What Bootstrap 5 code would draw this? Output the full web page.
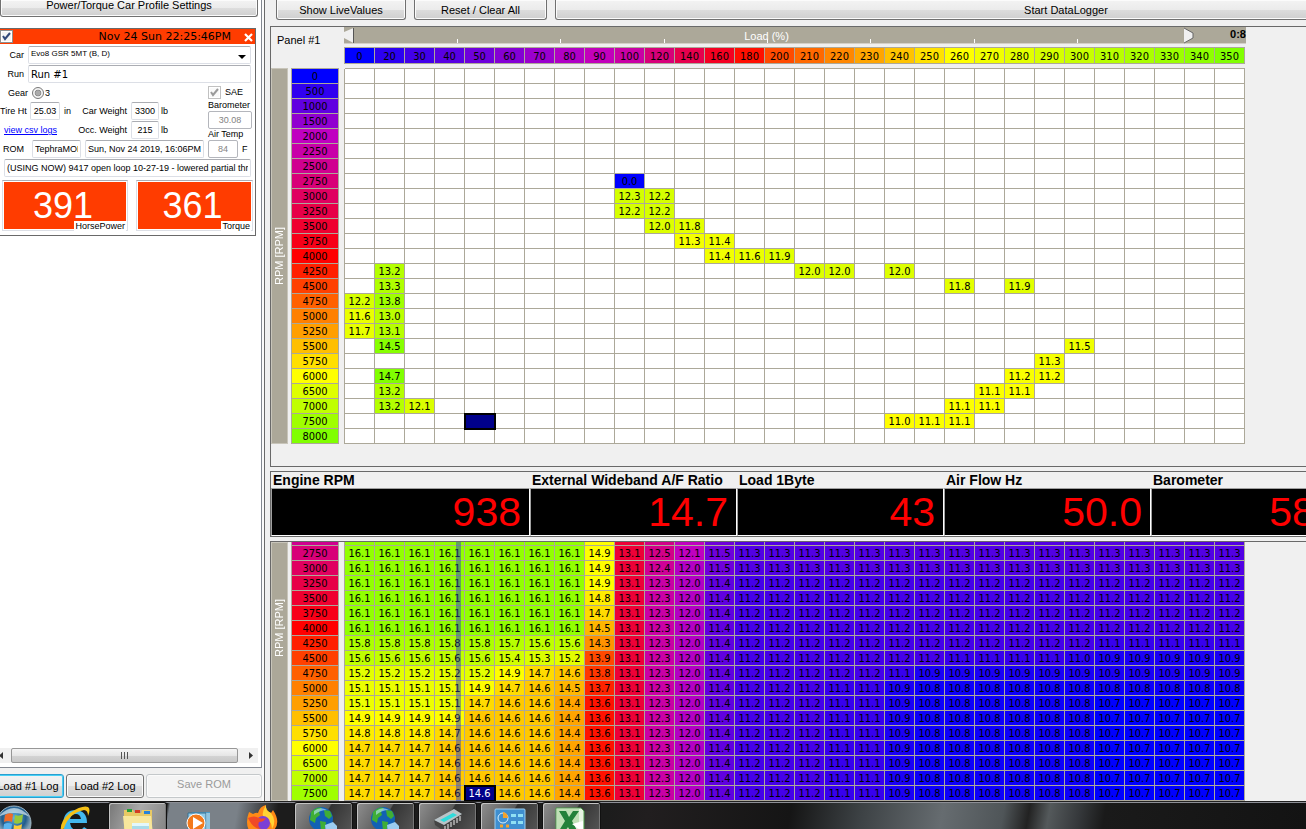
<!DOCTYPE html>
<html lang="en">
<head>
<meta charset="utf-8">
<meta name="viewport" content="width=device-width, initial-scale=1">
<title>DataLogger</title>
<link href="https://cdn.jsdelivr.net/npm/bootstrap@5.3.0/dist/css/bootstrap.min.css" rel="stylesheet">
<style>
:root{--tan:#aca899;--face:#f0f0f0;--edge:#696969}
body{font-family:"Liberation Sans",Arial,sans-serif;font-size:11px;line-height:14px;color:#000;background:var(--face)}
.winbtn{font-size:11px;line-height:14px;padding:0 4px;height:24px;border:1px solid #707070;border-radius:3px;color:#000;white-space:nowrap;
 background:linear-gradient(#f3f3f3,#ebebeb 50%,#dddddd 51%,#cfcfcf);box-shadow:inset 0 0 0 1px #fbfbfb}
.winbtn:disabled{color:#9a9a9a;background:#f4f4f4;border-color:#c4c8ca}
.winbtn.hot{border-color:#2a9fd0;box-shadow:inset 0 0 0 1px #48d0f5}
.hanging{border-top:0;border-radius:0 0 3px 3px;height:20px}
/* left column */
.side{width:265px;border-right:1px solid var(--edge);background:#fafafa}
.loglist{width:262px;background:#fff;border-right:1px solid #828790;border-bottom:1px solid #828790}
.sidebar-top{width:258px;height:17px}
.loadbar{height:33px;width:262px;padding-top:6px;gap:2px;background:var(--face)}
.load1{width:72px;margin-left:-8px}
.load2{width:78px}
.runbox{width:256px;margin-top:11px;border:1px solid #696969;border-left:0;background:#fff;font-size:9px;line-height:11px;padding-bottom:4px}
.runhead{background:#ff3c00;height:15px}
.runhead time{font:11px/14px "DejaVu Sans",sans-serif}
.fieldbox{font-size:9px;line-height:11px;height:18px;border:1px solid #dcdfe6;border-top-color:#abadb3;border-radius:2px;padding:0 2px;background:#fff;color:#000;min-width:0}
.fieldbox:disabled{color:#838383;background:#fff;opacity:1;border-color:#b4b6bc}
.pick{appearance:none;font-size:8px;padding-bottom:3px;background:#fff url("data:image/svg+xml,%3Csvg xmlns='http://www.w3.org/2000/svg' width='8' height='4'%3E%3Cpath d='M0 0h8L4 4z'/%3E%3C/svg%3E") no-repeat right 4px top 8px}
.fieldbox.verd{font-family:"DejaVu Sans",sans-serif;font-size:10px}
.tick{appearance:none;width:13px;height:13px;border:1px solid #8e8f8f;margin:0;background:#f4f4f4 url("data:image/svg+xml,%3Csvg xmlns='http://www.w3.org/2000/svg' viewBox='0 0 11 11'%3E%3Cpath d='M2 5L4 8L9 2' fill='none' stroke='%2332497a' stroke-width='2'/%3E%3C/svg%3E");box-shadow:inset 0 0 0 1px #fff}
.tick:disabled{filter:grayscale(1) opacity(.55)}
.dot{appearance:none;width:12px;height:12px;border:1px solid #777;border-radius:50%;margin:0 1px 0 4px;background:radial-gradient(#aaa 0 30%,#888 42%,#f4f4f4 52%)}
.frow{height:19px}
.frow label,.frow span,.frow a{padding-top:4px;white-space:nowrap}
.frow:has(#car){margin-top:2px}
.frow .unit{width:49px;padding-left:2px}
.frow .wide-gap{margin-left:auto;padding-right:4px}
.gearrow{height:18px}
.leftcol{width:208px}
.rightcol{width:46px}
.rightcol label{line-height:11px}
.saerow{height:16px}
.w-label{width:28px;text-align:right}
.w28{width:28px}.w30{width:30px}.w44{width:44px}.w49{width:49px}
.powers{padding:3px 2px 0;gap:8px}
.power{height:51px;border:1px solid #dcdfe6;border-top-color:#abadb3;background:#fff;padding:1px}
.power:first-child{width:126px}
.power output{background:#ff3c00;color:#fff;font-size:36px;line-height:47px;text-align:center;padding-right:4px}
.power label{right:1px;bottom:-2px;background:#fff;line-height:11px;padding:0 1px}
.hscroll{height:15px;width:258px;background:#f0f0f0}
.hthumb{height:15px;border:1px solid #979797;border-radius:2px;background:linear-gradient(#f5f5f5,#e6e6e6 50%,#d4d4d4 51%,#c8c8c8)}
/* map panels */
.workarea{margin-left:5px}
.toolbar{height:26px;padding-left:6px}
.toolbar .winbtn{flex:none}
.b-show{width:130px}.b-reset{width:133px}.b-start{width:1022px}
.mappanel{border-top:1px solid var(--edge);border-left:1px solid var(--edge);overflow:hidden}
.logpanel{height:441px;border-bottom:1px solid var(--edge)}
.strip{height:17px;width:902px;background:var(--tan);border-bottom:1px solid #d4d0c8;flex:none;line-height:18px}
.strip b{width:51px;text-align:right;line-height:15px}
.panelname{width:73px;padding:6px 0 0 6px;line-height:14px}
.ticks i{width:1px;height:4px;background:#fff}
.ticks{inset:auto 168px 0 113px}
.spine{width:17px;background:var(--tan);border:1px solid #c8c5ba;color:#fff;line-height:15px}
.spine span{writing-mode:vertical-rl;transform:rotate(180deg);white-space:nowrap}
.logpanel .spine{margin-top:21px}
.rompanel .spine{padding-top:56px}
.map{width:954px;table-layout:fixed;border-collapse:separate;border-spacing:0;margin-left:3px;font:11px/13px "DejaVu Sans Condensed","DejaVu Sans",sans-serif;flex:none;text-align:center}
.map th,.map td{padding:1px 0 0;height:15px;font-weight:400;border:0 solid var(--tan);border-width:0 1px 1px 0;overflow:hidden;white-space:nowrap}
.map td{background:#fff}
.map tbody th{border-left-width:1px}
.map .gapcol{background:var(--face);border-bottom-width:0}
.map thead th{border-top-width:1px;height:17px}
.map thead td{background:var(--face);border-width:0}
.map thead .gapcol{border-width:0 1px 0 0}
.map .gaprow td{height:5px;padding:0;line-height:4px;border-bottom-width:1px}
.map .gaprow .gapcol{border-bottom-width:0;border-right-width:0}
.map .partial>*{height:4px;padding:0;line-height:3px}
.map td.cursor{background:#00008b;color:#fff;outline:2px solid #000;outline-offset:-1px}
.trace{top:0;bottom:0;left:185px;width:5px;background:rgba(35,55,200,.45)}
/* gauges */
.gauges{border:1px solid var(--edge);border-right:0;margin:4px 0}
.gauge{width:207px;flex:none}
.gauge.wide{width:259px}
.gauge dt{font-size:14px;line-height:16px;padding-left:2px;white-space:nowrap}
.gauge dd{height:48px;margin:0;background:#000;color:#f00;font-size:41px;line-height:47px;text-align:right;padding-right:8px;border:1px solid #a0a0a0;border-color:#a0a0a0 #fff #fff #a0a0a0}
/* taskbar */
.taskbar{height:28px;flex:none;border-top:1px solid #222;box-shadow:inset 0 1px #8d8f96;
 background:linear-gradient(100deg,#181818 0 165px,#7a8188 168px 235px,#1c1c1c 275px 600px,#211e1f 640px,#151515 780px,#3d4245 850px,#666c70 930px,#4f5558 990px,#222 1015px,#54595b 1035px,#35383b 1065px,#1a1a1a 1090px,#131313)}
.task{height:28px;width:62px;border:0;padding:3px 0 0;background:none;flex:none;overflow:hidden}
.task.open{width:59px;margin-right:3px;border:1px solid #111;border-bottom:0;border-radius:3px 3px 0 0;box-shadow:inset 1px 1px #c4c4c4,inset -1px 0 #777;background:linear-gradient(120deg,#8f8f8f,#5b5b5b 50%,#333 52%,#555)}
.task.lit{margin-right:0;background:linear-gradient(110deg,#777,#aaa 50%,#858585)}
.task.start{width:44px;margin-left:-8px}
.task.ie{width:72px}
.task.fox{width:65px}
.task svg{display:block;margin:auto;overflow:visible}
</style>
</head>
<body class="vh-100 d-flex flex-column overflow-hidden">
<main class="d-flex flex-grow-1 overflow-hidden">
 <aside class="side d-flex flex-column flex-shrink-0">
  <div class="loglist flex-grow-1 d-flex flex-column">
   <button class="winbtn hanging sidebar-top pb-1 d-flex align-items-end justify-content-center">Power/Torque Car Profile Settings</button>
   <form class="runbox">
    <div class="runhead d-flex align-items-center">
     <input class="tick" type="checkbox" checked aria-label="Show run">
     <time class="ms-auto">Nov 24 Sun 22:25:46PM</time>
     <button type="button" class="border-0 bg-transparent p-0 d-flex ms-1 ps-2" aria-label="Close run"><svg width="12" height="10" viewBox="0 0 12 10"><path d="M2 2L9 9M9 2L2 9" stroke="#fff" stroke-width="2.200"/></svg></button>
    </div>
    <div class="frow d-flex pe-1"><label for="car" class="w-label pe-1 flex-shrink-0">Car</label>
     <select id="car" class="fieldbox pick flex-grow-1"><option>Evo8 GSR 5MT (B, D)</option></select></div>
    <div class="frow d-flex pe-1"><label for="run" class="w-label pe-1 flex-shrink-0">Run</label>
     <input id="run" class="fieldbox verd flex-grow-1" value="Run #1"></div>
    <div class="d-flex">
     <div class="leftcol flex-shrink-0">
      <div class="gearrow d-flex align-items-center"><span class="w-label">Gear</span><input id="g3" class="dot" type="radio" checked><label for="g3">3</label></div>
      <div class="frow d-flex"><label for="tire" class="w30 flex-shrink-0">Tire Ht</label><input id="tire" class="fieldbox text-center w30" value="25.03"><span class="ps-1">in</span>
       <label for="cw" class="wide-gap">Car Weight</label><input id="cw" class="fieldbox text-center w28" value="3300"><span class="unit">lb</span></div>
      <div class="frow d-flex"><a href="#csv" class="ps-1" style="color:#00f">view csv logs</a>
       <label for="ow" class="wide-gap">Occ. Weight</label><input id="ow" class="fieldbox text-center w28" value="215"><span class="unit">lb</span></div>
      <div class="frow d-flex gap-1 pe-1"><label for="rom" class="w-label flex-shrink-0 pe-1">ROM</label><input id="rom" class="fieldbox w49 flex-shrink-0" value="TephraMOD"><input class="fieldbox flex-grow-1" aria-label="ROM date" value="Sun, Nov 24 2019, 16:06PM"></div>
     </div>
     <div class="rightcol flex-shrink-0">
      <div class="saerow d-flex align-items-center gap-1"><input id="sae" class="tick" type="checkbox" checked disabled><label for="sae">SAE</label></div>
      <label for="baro" class="d-block">Barometer</label>
      <input id="baro" class="fieldbox text-center d-block w44" value="30.08" disabled>
      <label for="temp" class="d-block">Air Temp</label>
      <div class="frow d-flex"><input id="temp" class="fieldbox text-center w30" value="84" disabled><span class="ps-1">F</span></div>
     </div>
    </div>
    <div class="px-1 d-flex"><input class="fieldbox flex-grow-1" aria-label="Notes" value="(USING NOW) 9417 open loop 10-27-19 - lowered partial throttle"></div>
    <div class="powers d-flex">
     <div class="power position-relative d-flex"><output id="hp" class="flex-grow-1">391</output><label for="hp" class="position-absolute">HorsePower</label></div>
     <div class="power position-relative d-flex flex-grow-1"><output id="tq" class="flex-grow-1">361</output><label for="tq" class="position-absolute">Torque</label></div>
    </div>
   </form>
   <div class="hscroll mt-auto mb-1 d-flex align-items-center">
    <svg width="11" height="9" class="flex-shrink-0"><path d="M3 1v7L-1 4.500z" fill="#333"/></svg>
    <div class="hthumb flex-grow-1 d-flex align-items-center justify-content-center"><svg width="8" height="7"><path d="M.5 0v7M3.500 0v7M6.500 0v7" stroke="#555"/></svg></div>
    <svg width="20" height="9" class="flex-shrink-0"><path d="M11 1v7l4-3.500z" fill="#333"/></svg>
   </div>
  </div>
  <div class="loadbar d-flex flex-shrink-0">
   <button class="winbtn hot load1">Load #1 Log</button>
   <button class="winbtn load2">Load #2 Log</button>
   <button class="winbtn flex-grow-1 pb-1" disabled>Save ROM</button>
  </div>
 </aside>
 <section class="workarea flex-grow-1 d-flex flex-column overflow-hidden">
  <div class="toolbar d-flex gap-2 flex-shrink-0">
   <button class="winbtn hanging b-show">Show LiveValues</button>
   <button class="winbtn hanging b-reset">Reset / Clear All</button>
   <button class="winbtn hanging b-start">Start DataLogger</button>
  </div>
  <div class="mappanel logpanel flex-shrink-0">
   <div class="d-flex"><div class="panelname">Panel #1</div>
    <div class="strip position-relative text-center text-white">
     <div class="ticks position-absolute d-flex justify-content-between"><i></i><i></i><i></i><i></i><i></i><i></i><i></i></div>
     <div class="d-flex position-relative">
      <svg width="10" height="17" class="flex-shrink-0"><path d="M9.500 1v15L0 11V5z" fill="#f0f0f0"/><path d="M9.500 1v15" stroke="#555"/></svg>
      <span class="flex-grow-1">Load (%)</span>
      <svg width="16" height="17" class="flex-shrink-0"><path d="M5 1v15l9-5V6z" fill="#f0f0f0"/><path d="M5 1l9 5v5l-9 5" fill="none" stroke="#666"/></svg>
      <b class="text-black ps-2">0:8</b>
     </div>
    </div></div>
   <div class="d-flex">
    <div class="spine d-flex align-items-center justify-content-center"><span>RPM [RPM]</span></div>
    <table class="map" id="logmap"></table>
   </div>
  </div>
  <dl class="gauges d-flex flex-shrink-0 overflow-hidden">
   <div class="gauge wide"><dt>Engine RPM</dt><dd>938</dd></div>
   <div class="gauge"><dt>External Wideband A/F Ratio</dt><dd>14.7</dd></div>
   <div class="gauge"><dt>Load 1Byte</dt><dd>43</dd></div>
   <div class="gauge"><dt>Air Flow Hz</dt><dd>50.0</dd></div>
   <div class="gauge"><dt>Barometer</dt><dd>58.0</dd></div>
  </dl>
  <div class="mappanel rompanel flex-grow-1">
   <div class="d-flex position-relative">
    <div class="spine d-flex align-items-start justify-content-center"><span>RPM [RPM]</span></div>
    <table class="map" id="rommap"></table>
    <div class="trace position-absolute"></div>
   </div>
  </div>
 </section>
</main>
<footer class="taskbar d-flex overflow-hidden">
 <button class="task start" aria-label="Start"><svg width="36" height="36" viewBox="0 0 36 36"><defs><radialGradient id="orb" cx=".5" cy=".35"><stop offset="0" stop-color="#5fb4e4"/><stop offset=".7" stop-color="#215c8c"/><stop offset="1" stop-color="#7fa0b4"/></radialGradient></defs><circle cx="18" cy="18" r="17" fill="url(#orb)" stroke="#9fb4c0"/><path d="M2 12Q18-6 34 12Q18 4 2 12z" fill="#d8e8f0" opacity=".7"/><path d="M9 10q4-3 8-1l-1 8q-4-2-8 0z" fill="#f06a28"/><path d="M19 10q4 2 8-1l-1 8q-4 3-8 1z" fill="#96c83c"/><path d="M8 19q4-2 8 0l-1 8q-4-2-8 0z" fill="#5ab4ee"/><path d="M18 20q4 2 8-1l-1 8q-4 3-8 1z" fill="#fccb38"/></svg></button>
 <button class="task ie" aria-label="Internet Explorer"><svg width="30" height="30" viewBox="-3 -1 30 30"><path d="M27 17H10q1 7 7 7 5 0 7-3l3 2q-4 6-11 6Q3 29 3 17 4 4 16 4q11 1 11 13zM10 13h11q-1-5-5-5-5 0-6 5z" fill="#43b8ee"/><path d="M1 26Q-1 16 10 7 22-1 28 1q3 2 0 9 0-6-4-6Q9 7 4 22 3 25 1 26z" fill="#f5c016"/></svg></button>
 <button class="task open lit" aria-label="Explorer"><svg width="32" height="28" viewBox="0 0 32 28"><path d="M2 4h9l2 3h6l1-3h10v24H2z" fill="#e8c964"/><path d="M1 10h28l2 18H3z" fill="#f7e69c"/><path d="M5 3h5v3H5z" fill="#24a03a"/><path d="M13 4h5v3h-5z" fill="#d43c24"/><path d="M22 5h6v3h-6z" fill="#2883d8"/><path d="M10 17h17v11H10z" fill="#a9dbea"/><path d="M10 17h17v3H10z" fill="#e3f7fb"/></svg></button>
 <button class="task" aria-label="Media Player"><svg width="28" height="28" viewBox="0 -3 28 28"><path d="M8 4h18v24H8z" fill="#4a9bc8"/><path d="M4 5h18v23H4z" fill="#8fcbe8" stroke="#396f8f"/><path d="M23 5v23M25 5v23" stroke="#d6edf6"/><circle cx="12" cy="15" r="9" fill="#f37a1c" stroke="#fff"/><path d="M9 9l10 6-10 6z" fill="#fff"/></svg></button>
 <button class="task fox" aria-label="Firefox"><svg width="32" height="32" viewBox="0 0 32 32"><path d="M3 7q2 1 4 2 3-2 5-1Q14 1 20 0q-1 5 5 8l2-3q8 12 1 20-6 7-15 6Q1 29 1 17q0-5 2-10z" fill="#ff8a16"/><path d="M20 0q-1 5 5 8 6 8 1 16 0-8-7-10-5-4 1-14z" fill="#ffd334"/><circle cx="17" cy="18" r="7" fill="#7b3fd6"/><path d="M2 13q6-3 11 0 4 1 7 0-2 4-7 4-2 5 2 7-8 0-13-11z" fill="#f04a28"/></svg></button>
 <button class="task open" aria-label="Network 1"><svg width="28" height="28" viewBox="2 0 28 28"><circle cx="13" cy="13" r="12" fill="#1261b4"/><path d="M3 6q6-6 11-4l-3 4 1 3-4 3-1 5-5-3zM16 4l6 1 2 5-3 3-4-3zM12 15l6 1-1 7-4 2z" fill="#3fae36"/><path d="M6 5q6-5 13-1-7 0-13 5z" fill="#bde8ff" opacity=".6"/><path d="M17 19l8-3 4 4v8H18z" fill="#9ccdf0"/></svg></button>
 <button class="task open" aria-label="Network 2"><svg width="28" height="28" viewBox="2 0 28 28"><circle cx="13" cy="13" r="12" fill="#1261b4"/><path d="M3 6q6-6 11-4l-3 4 1 3-4 3-1 5-5-3zM16 4l6 1 2 5-3 3-4-3zM12 15l6 1-1 7-4 2z" fill="#3fae36"/><path d="M6 5q6-5 13-1-7 0-13 5z" fill="#bde8ff" opacity=".6"/><path d="M17 19l8-3 4 4v8H18z" fill="#9ccdf0"/></svg></button>
 <button class="task open" aria-label="Flash tool"><svg width="32" height="24" viewBox="0 0 32 24"><path d="M2 14L22 3l8 5v6L12 25l-9-6z" fill="#444"/><path d="M2 14L22 3l8 5-18 11z" fill="#b9c4c8"/><path d="M8 14l13-7 4 2-13 7z" fill="#2edcdc"/><path d="M13 20v5M16 18v5M19 16v5M22 14v5M25 12v5M28 10v5" stroke="#eee"/></svg></button>
 <button class="task open" aria-label="Control Panel"><svg width="32" height="26" viewBox="0 0 32 26"><rect x="1" y="3" width="30" height="25" rx="1" fill="#3f8fd0" stroke="#9fd0f0"/><circle cx="9" cy="12" r="5" fill="none" stroke="#d8f0ff"/><path d="M9 12V6a6 6 0 0 1 5 6z" fill="#f4a22c"/><path d="M17 8h5v3h-5zM24 8h5v3h-5zM17 15h5v3h-5zM24 15h5v3h-5z" fill="#8fe0f4"/><path d="M6 20h3M12 20h3" stroke="#f4a22c" stroke-width="3"/></svg></button>
 <button class="task open" aria-label="Excel"><svg width="30" height="28" viewBox="2 0 30 28"><path d="M1 2h25l3 3v24H1z" fill="#e6f3e2" stroke="#4c9a48"/><path d="M2 3h22v14L10 28H2z" fill="#bfe0b6"/><path d="M4 5h7l3 6 4-6h6l-7 10 7 13h-7l-4-7-5 7H2l8-13z" fill="#23813a"/><path d="M17 18l11-3v11z" fill="#fff"/></svg></button>
</footer>
<script src="https://cdn.jsdelivr.net/npm/bootstrap@5.3.0/dist/js/bootstrap.bundle.min.js"></script>
<script>
const loads=[0,20,30,40,50,60,70,80,90,100,120,140,160,180,200];
for(let v=210;v<=350;v+=10)loads.push(v);
const rpms=[0,500,1000,1500,2000];
for(let v=2250;v<=6000;v+=250)rpms.push(v);
rpms.push(6500,7000,7500,8000);
const stops=[[0,0,255],[192,0,192],[255,0,0],[255,255,0],[128,255,0]];
function heat(t){
  t=Math.max(0,Math.min(1,t))*4;
  const i=Math.min(3,Math.floor(t)),f=t-i;
  return 'rgb('+stops[i].map((c,k)=>Math.round(c+(stops[i+1][k]-c)*f)).join(',')+')';
}
const paint=(tag,v,t)=>`<${tag} style="background:${heat(t)}">${v}</${tag}>`;
const cols='<colgroup><col style="width:48px"><col style="width:6px">'+'<col style="width:30px">'.repeat(30)+'</colgroup>';
const axis=r=>paint('th',r,r/8000)+'<td class="gapcol"></td>';
// logged air/fuel values: rpm -> {column: value}
const logged={2750:{9:0},3000:{9:12.3,10:12.2},3250:{9:12.2,10:12.2},3500:{10:12,11:11.8},3750:{11:11.3,12:11.4},
4000:{12:11.4,13:11.6,14:11.9},4250:{1:13.2,15:12,16:12,18:12},4500:{1:13.3,20:11.8,22:11.9},4750:{0:12.2,1:13.8},
5000:{0:11.6,1:13},5250:{0:11.7,1:13.1},5500:{1:14.5,24:11.5},5750:{23:11.3},6000:{1:14.7,22:11.2,23:11.2},
6500:{1:13.2,21:11.1,22:11.1},7000:{1:13.2,2:12.1,20:11.1,21:11.1},7500:{18:11,19:11.1,20:11.1}};
let h=cols+'<thead><tr><td></td><td class="gapcol"></td>'+loads.map(v=>paint('th',v,v<=175?v/350:v<260?.5+(v-175)/340:.75+(v-260)/360)).join('')+
 '</tr><tr class="gaprow"><td></td><td class="gapcol"></td>'+'<td></td>'.repeat(30)+'</tr></thead><tbody>';
for(const r of rpms){
  h+='<tr>'+axis(r)+loads.map((_,c)=>{
    if(r===7500&&c===4)return '<td class="cursor"></td>';
    const v=(logged[r]||{})[c];
    return v===undefined?'<td></td>':paint('td',v.toFixed(1),v/14.7);
  }).join('')+'</tr>';
}
document.getElementById('logmap').innerHTML=h+'</tbody>';
// ROM table rows as value*count runs
const mid=' 13.1 12.3 12.0 11.4 ',low='11.2*3 11.1*2 10.9 10.8*6 10.7*5',end='14.7*3 14.6*4 14.4 13.6'+mid+low;
const rom={2500:'16.1*8 14.9 13.1 12.5 12.1 11.5 11.3*17',2750:'16.1*8 14.9 13.1 12.5 12.1 11.5 11.3*17',3000:'16.1*8 14.9 13.1 12.4 12.0 11.5 11.3*17',
3250:'16.1*8 14.9'+mid+'11.2*17',3500:'16.1*8 14.8'+mid+'11.2*17',3750:'16.1*8 14.7'+mid+'11.2*17',4000:'16.1*8 14.5'+mid+'11.2*17',
4250:'15.8*5 15.7 15.6*2 14.3'+mid+'11.2*12 11.1*5',4500:'15.6*5 15.4 15.3 15.2 13.9'+mid+'11.2*7 11.1*4 11.0 10.9*5',
4750:'15.2*5 14.9 14.7 14.6 13.8'+mid+'11.2*5 11.1 10.9*11',5000:'15.1*4 14.9 14.7 14.6 14.5 13.7'+mid+'11.2*3 11.1*2 10.9 10.8*11',
5250:'15.1*4 14.7 14.6*2 14.4 13.6'+mid+low,5500:'14.9*4 14.6*3 14.4 13.6'+mid+low,5750:'14.8*3 14.7 14.6*3 14.4 13.6'+mid+low,
6000:end,6500:end,7000:end,7500:end};
h=cols+'<tbody>';
for(const r in rom){
  const vals=rom[r].trim().split(/\s+/).flatMap(s=>{const [v,n]=s.split('*');return Array(+(n||1)).fill(v)});
  const cut=r==='2500';
  h+=(cut?'<tr class="partial">'+axis(r).replace('>2500','>'):'<tr>'+axis(r))+
   vals.map((v,c)=>r==='7500'&&c===4?`<td class="cursor">${v}</td>`:paint('td',cut?'':v,(v-10.7)/5.6)).join('')+'</tr>';
}
document.getElementById('rommap').innerHTML=h+'</tbody>';
</script>
</body>
</html>
